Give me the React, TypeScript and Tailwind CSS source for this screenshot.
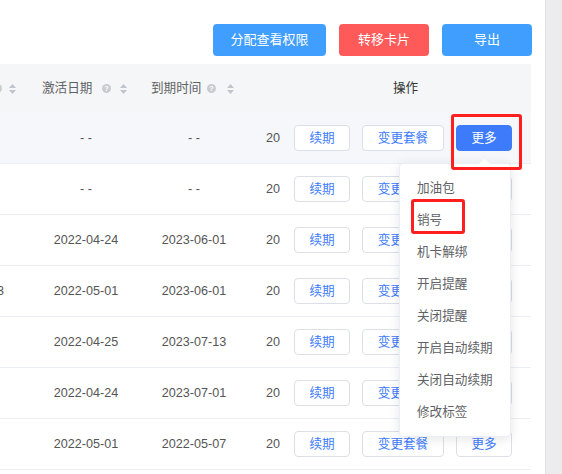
import React from "react";

const font = { fontFamily: '"Liberation Sans", "Noto Sans CJK SC", sans-serif' };

type Row = { a: string; b: string; c: string; d: string; hover?: boolean };

const rows: Row[] = [
  { a: "", b: "- -", c: "- -", d: "2023-06-01", hover: true },
  { a: "", b: "- -", c: "- -", d: "2023-06-01" },
  { a: "", b: "2022-04-24", c: "2023-06-01", d: "2023-06-01" },
  { a: "13", b: "2022-05-01", c: "2023-06-01", d: "2023-06-01" },
  { a: "", b: "2022-04-25", c: "2023-07-13", d: "2023-07-13" },
  { a: "", b: "2022-04-24", c: "2023-07-01", d: "2023-07-01" },
  { a: "", b: "2022-05-01", c: "2022-05-07", d: "2022-05-07" },
  { a: "", b: "", c: "", d: "" },
];

const menu = ["加油包", "销号", "机卡解绑", "开启提醒", "关闭提醒", "开启自动续期", "关闭自动续期", "修改标签"];

function Help() {
  return (
    <svg width="9" height="9" viewBox="0 0 10 10" className="shrink-0">
      <circle cx="5" cy="5" r="5" fill="#c9cbcf" />
      <text x="5" y="8" textAnchor="middle" fontSize="8" fontWeight="bold" fill="#fff" fontFamily="Liberation Sans">?</text>
    </svg>
  );
}

function Sort() {
  return (
    <svg width="7" height="10" viewBox="0 0 7 10" className="shrink-0">
      <path d="M3.5 0 L7 4 L0 4 Z" fill="#c0c4cc" />
      <path d="M3.5 10 L7 6 L0 6 Z" fill="#c0c4cc" />
    </svg>
  );
}

function ActionBtn({ label, w, solid }: { label: string; w: string; solid?: boolean }) {
  return (
    <div
      className={`${w} h-[26px] rounded-[4px] border flex items-center justify-center text-[12.6px] ${
        solid ? "bg-[#3e7bfa] border-[#3e7bfa] text-white" : "bg-white border-[#dcdfe6] text-[#3d7bfc]"
      }`}
    >
      {label}
    </div>
  );
}

export default function App() {
  return (
    <div className="w-[562px] h-[474px] flex bg-white overflow-hidden relative text-[12.6px]" style={font}>
      <div className="w-[545px] shrink-0">
        <div className="h-[64px] flex items-start justify-end gap-[13px] pt-[24px] pr-[13px]">
          <div className="w-[113px] h-[32px] rounded-[4px] bg-[#409eff] text-white flex items-center justify-center text-[13px]">分配查看权限</div>
          <div className="w-[90px] h-[32px] rounded-[4px] bg-[#ff5a5a] text-white flex items-center justify-center text-[13px]">转移卡片</div>
          <div className="w-[90px] h-[32px] rounded-[4px] bg-[#409eff] text-white flex items-center justify-center text-[13px]">导出</div>
        </div>

        <div className="w-[531px]">
          <div className="h-[49px] flex bg-[#f5f6f7] text-[#606266]">
            <div className="w-[30px] flex items-center justify-end pr-[14px] gap-[7px] overflow-hidden">
              <Help />
              <Sort />
            </div>
            <div className="w-[112px] flex items-center pl-[12px]">
              <span>激活日期</span>
              <span className="ml-[10px]"><Help /></span>
              <span className="ml-[9px] flex"><Sort /></span>
            </div>
            <div className="w-[104px] flex items-center pl-[9px]">
              <span className="whitespace-nowrap">到期时间</span>
              <span className="ml-[6px]"><Help /></span>
              <span className="ml-[11px] flex"><Sort /></span>
            </div>
            <div className="w-[34px]" />
            <div className="w-[251px] flex items-center justify-center text-[#333]">操作</div>
          </div>

          {rows.map((r, i) => (
            <div
              key={i}
              className={`h-[51px] flex border-b border-[#ebeef5] text-[#555] ${r.hover ? "bg-[#f5f7fa]" : "bg-white"}`}
            >
              <div className="w-[30px] flex items-center justify-end pr-[26px] overflow-hidden whitespace-nowrap">{r.a}</div>
              <div className="w-[112px] flex items-center justify-center">{r.b}</div>
              <div className="w-[104px] flex items-center justify-center">{r.c}</div>
              <div className="w-[34px] flex items-center pl-[20px] overflow-hidden whitespace-nowrap">{r.d.slice(0, 2)}</div>
              <div className="w-[251px] flex items-center pl-[14px] gap-[12px]">
                {i < 7 ? (
                  <>
                    <ActionBtn label="续期" w="w-[56px]" />
                    <ActionBtn label="变更套餐" w="w-[82px]" />
                    <ActionBtn label="更多" w="w-[56px]" solid={r.hover} />
                  </>
                ) : null}
              </div>
            </div>
          ))}
        </div>
      </div>
      <div className="flex-1 bg-[#ececef] border-l border-[#e0e0e4]" />

      {/* dropdown */}
      <div className="absolute left-[399px] top-[163px] w-[112px] h-[274px] bg-white border border-[#ebeef5] rounded-[4px] shadow-[0_2px_12px_rgba(0,0,0,0.1)] pt-[8px]">
        <div className="absolute -top-[5px] left-[80px] w-[9px] h-[9px] bg-white border-l border-t border-[#ebeef5] rotate-45" />
        {menu.map((m) => (
          <div key={m} className="h-[32px] flex items-center pl-[17px] text-[#606266] whitespace-nowrap">
            {m}
          </div>
        ))}
      </div>

      {/* highlight boxes */}
      <div className="absolute left-[451px] top-[114px] w-[71px] h-[56px] border-[3px] border-[#ff1f1f] rounded-[3px]" />
      <div className="absolute left-[411px] top-[199px] w-[54px] h-[35px] border-[3px] border-[#ff1f1f] rounded-[3px]" />
    </div>
  );
}
